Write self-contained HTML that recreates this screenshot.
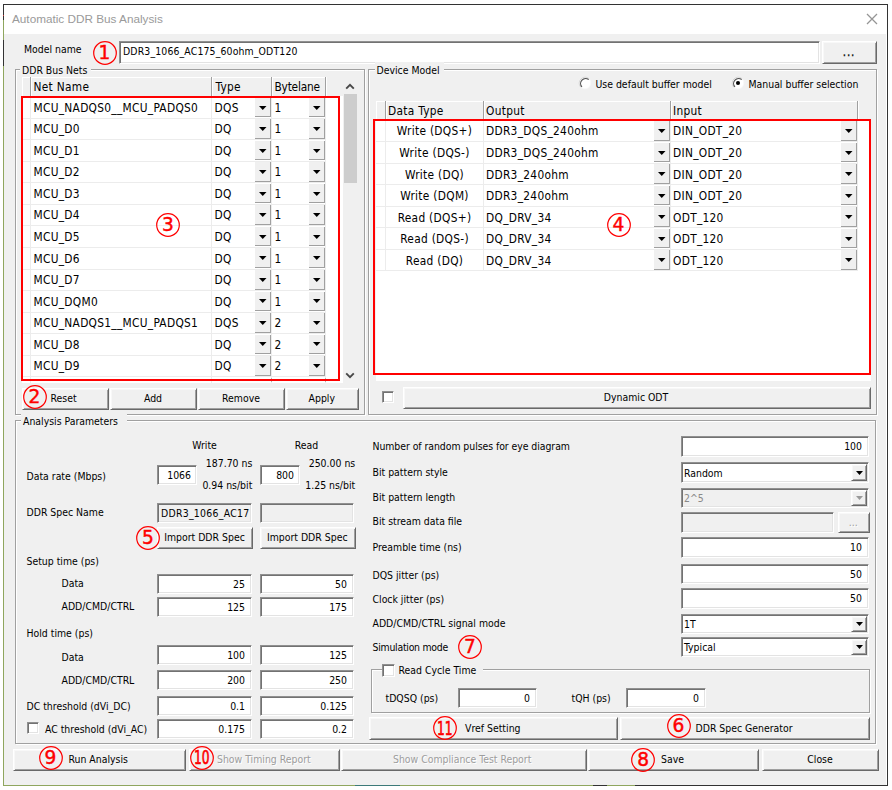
<!DOCTYPE html>
<html lang="en"><head><meta charset="utf-8"><title>Automatic DDR Bus Analysis</title>
<style>
html,body{margin:0;padding:0;background:#fff;}
body{position:relative;width:892px;height:790px;overflow:hidden;font-family:"DejaVu Sans Condensed","Liberation Sans",sans-serif;font-size:10.4px;color:#000;}
#win{position:absolute;left:3px;top:4px;width:883px;height:780px;border:1px solid #333;background:#fff}
#title{position:absolute;left:4px;top:5px;width:883px;height:29px;background:#fff}
#client{position:absolute;left:4px;top:34px;width:882px;height:751px;background:#f0f0f0}
.bg{position:absolute;background:#8fa65e}
.t{position:absolute;white-space:pre;line-height:16px;height:16px}
#ttl{font-family:"Liberation Sans",sans-serif;font-size:11.75px;color:#9a9a9a}
.g{font-size:11.8px;letter-spacing:0.3px}
.a{position:absolute;display:block;overflow:visible}
.edit{position:absolute;box-sizing:border-box;background:#fff;border:1px solid;border-color:#909090 #fff #fff #909090;box-shadow:inset 1px 1px 0 #727272, inset -1px -1px 0 #e3e3e3;white-space:pre;overflow:hidden}
.edit.dis{background:#f0f0f0}
.cb.dis{color:#8a8a8a}
.cb{font-size:10.4px}
.btn{position:absolute;box-sizing:border-box;background:#f0f0f0;border:1px solid;border-color:#fff #696969 #696969 #fff;box-shadow:inset 1px 1px 0 #f8f8f8, inset -1px -1px 0 #a0a0a0;white-space:pre;overflow:hidden}
.bdis{color:#9d9d9d;text-shadow:1px 1px 0 #fff}
.gw{position:absolute;box-sizing:border-box;border:1px solid #fff}
.gd{position:absolute;box-sizing:border-box;border:1px solid #a0a0a0}
.gl{background:#f0f0f0;padding:0 8px 0 2px}
.grid{position:absolute;background:#fff}
.ghdr0{position:absolute;background:#f0f0f0}
.ghdr{position:absolute;background:#f0f0f0;box-shadow:inset 1px 1px 0 #fff}
.hsep{position:absolute;width:1px;background:#a0a0a0;box-shadow:1px 0 0 #fff}
.vsep{position:absolute;width:1px;background:#ececec}
.rsep{position:absolute;height:1px;background:#ececec}
.gbtn{position:absolute;box-sizing:border-box;background:#f0f0f0;border-right:1px solid #a0a0a0;border-bottom:1px solid #a0a0a0}
.red{position:absolute;border:2px solid #ff0000}
.cn{position:absolute;width:30px;height:24px;line-height:24px;text-align:center;color:#ff0000;font-family:"DejaVu Sans","Liberation Sans",sans-serif;font-size:18.6px;-webkit-text-stroke:0.45px #ff0000}
.cn2{display:inline-block;transform:scaleX(0.66);transform-origin:50% 50%;-webkit-text-stroke:0.65px #ff0000}
.chk{position:absolute;box-sizing:border-box;background:#fff;border:1px solid;border-color:#909090 #fff #fff #909090;box-shadow:inset 1px 1px 0 #727272, inset -1px -1px 0 #e3e3e3}
</style></head>
<body>
<div id="win"></div>
<div id="title"></div>
<div id="client"></div>
<div class="bg" style="left:3px;top:20px;width:1px;height:20px"></div>
<div style="position:absolute;left:3px;top:15px;width:1px;height:1px;background:#d04040"></div>
<div class="bg" style="left:3px;top:66px;width:1px;height:720px"></div>
<div class="bg" style="left:3px;top:785px;width:590px;height:1px"></div>
<div class="bg" style="left:607px;top:785px;width:28px;height:1px"></div>
<div style="position:absolute;left:355px;top:785px;width:45px;height:1px;background:#3d7a78"></div>
<span class="t" id="ttl" style="left:12px;top:11px">Automatic DDR Bus Analysis</span>
<svg class="a" style="left:866px;top:12.5px" width="12" height="12" viewBox="0 0 12 12"><path d="M1 1L11 11M11 1L1 11" stroke="#959595" stroke-width="1.25" fill="none"/></svg>
<span class="t " style="left:24px;top:41px;">Model name</span>
<svg class="a" style="left:90.5px;top:38.9px" width="28" height="28" viewBox="0 0 28 28"><circle cx="14.0" cy="14.0" r="11.3" fill="none" stroke="#ff0000" stroke-width="1.2"/></svg>
<span class="cn" style="left:89.5px;top:41.3px">1</span>
<div class="edit" style="left:119px;top:41px;width:701px;height:23px;line-height:19px;text-align:left;padding:0 4px 0 3px;letter-spacing:0.14px">DDR3_1066_AC175_60ohm_ODT120</div>
<div class="btn" style="left:822px;top:41px;width:55px;height:23px;"></div>
<span class="t " style="left:821.5px;width:55px;text-align:center;top:44px;letter-spacing:0.9px;font-size:11.5px;-webkit-text-stroke:0.25px #000">...</span>
<div class="gw" style="left:16px;top:70px;width:350px;height:346px"></div>
<div class="gd" style="left:15px;top:69px;width:350px;height:346px"></div>
<span class="t gl" style="left:20px;top:62px;padding-right:4px">DDR Bus Nets</span>
<div class="grid" style="left:22px;top:77px;width:336px;height:305.5px"></div>
<div class="ghdr0" style="left:22px;top:77px;width:321px;height:19px"></div>
<div class="ghdr" style="left:22px;top:77px;width:303.5px;height:19px"></div>
<div class="hsep" style="left:30.0px;top:77px;height:19px"></div>
<div class="hsep" style="left:210.5px;top:77px;height:19px"></div>
<div class="hsep" style="left:271.0px;top:77px;height:19px"></div>
<div class="hsep" style="left:325.0px;top:77px;height:19px"></div>
<span class="t g" style="left:33.5px;top:79px;">Net Name</span>
<span class="t g" style="left:215.5px;top:79px;">Type</span>
<span class="t g" style="left:274.5px;top:79px;letter-spacing:-0.2px">Bytelane</span>
<div class="rsep" style="left:22px;top:117.86999999999999px;width:303.5px"></div>
<span class="t g" style="left:33.5px;top:100px;">MCU_NADQS0__MCU_PADQS0</span>
<span class="t g" style="left:214.5px;top:100px;">DQS</span>
<span class="t g" style="left:274.5px;top:100px;">1</span>
<div class="gbtn" style="left:255px;top:97.85px;width:16px;height:19.52px"></div>
<svg class="a" style="left:259.25px;top:105.55999999999999px" width="7.5" height="4" viewBox="0 0 7.5 4"><path d="M0 0H7.5L3.75 4Z" fill="#000"/></svg>
<div class="gbtn" style="left:309px;top:97.85px;width:16px;height:19.52px"></div>
<svg class="a" style="left:313.25px;top:105.55999999999999px" width="7.5" height="4" viewBox="0 0 7.5 4"><path d="M0 0H7.5L3.75 4Z" fill="#000"/></svg>
<div class="rsep" style="left:22px;top:139.39px;width:303.5px"></div>
<span class="t g" style="left:33.5px;top:121px;">MCU_D0</span>
<span class="t g" style="left:214.5px;top:121px;">DQ</span>
<span class="t g" style="left:274.5px;top:121px;">1</span>
<div class="gbtn" style="left:255px;top:119.36999999999999px;width:16px;height:19.52px"></div>
<svg class="a" style="left:259.25px;top:127.07999999999998px" width="7.5" height="4" viewBox="0 0 7.5 4"><path d="M0 0H7.5L3.75 4Z" fill="#000"/></svg>
<div class="gbtn" style="left:309px;top:119.36999999999999px;width:16px;height:19.52px"></div>
<svg class="a" style="left:313.25px;top:127.07999999999998px" width="7.5" height="4" viewBox="0 0 7.5 4"><path d="M0 0H7.5L3.75 4Z" fill="#000"/></svg>
<div class="rsep" style="left:22px;top:160.91px;width:303.5px"></div>
<span class="t g" style="left:33.5px;top:143px;">MCU_D1</span>
<span class="t g" style="left:214.5px;top:143px;">DQ</span>
<span class="t g" style="left:274.5px;top:143px;">1</span>
<div class="gbtn" style="left:255px;top:140.89px;width:16px;height:19.52px"></div>
<svg class="a" style="left:259.25px;top:148.59999999999997px" width="7.5" height="4" viewBox="0 0 7.5 4"><path d="M0 0H7.5L3.75 4Z" fill="#000"/></svg>
<div class="gbtn" style="left:309px;top:140.89px;width:16px;height:19.52px"></div>
<svg class="a" style="left:313.25px;top:148.59999999999997px" width="7.5" height="4" viewBox="0 0 7.5 4"><path d="M0 0H7.5L3.75 4Z" fill="#000"/></svg>
<div class="rsep" style="left:22px;top:182.43px;width:303.5px"></div>
<span class="t g" style="left:33.5px;top:164px;">MCU_D2</span>
<span class="t g" style="left:214.5px;top:164px;">DQ</span>
<span class="t g" style="left:274.5px;top:164px;">1</span>
<div class="gbtn" style="left:255px;top:162.41px;width:16px;height:19.52px"></div>
<svg class="a" style="left:259.25px;top:170.12px" width="7.5" height="4" viewBox="0 0 7.5 4"><path d="M0 0H7.5L3.75 4Z" fill="#000"/></svg>
<div class="gbtn" style="left:309px;top:162.41px;width:16px;height:19.52px"></div>
<svg class="a" style="left:313.25px;top:170.12px" width="7.5" height="4" viewBox="0 0 7.5 4"><path d="M0 0H7.5L3.75 4Z" fill="#000"/></svg>
<div class="rsep" style="left:22px;top:203.95px;width:303.5px"></div>
<span class="t g" style="left:33.5px;top:186px;">MCU_D3</span>
<span class="t g" style="left:214.5px;top:186px;">DQ</span>
<span class="t g" style="left:274.5px;top:186px;">1</span>
<div class="gbtn" style="left:255px;top:183.93px;width:16px;height:19.52px"></div>
<svg class="a" style="left:259.25px;top:191.64px" width="7.5" height="4" viewBox="0 0 7.5 4"><path d="M0 0H7.5L3.75 4Z" fill="#000"/></svg>
<div class="gbtn" style="left:309px;top:183.93px;width:16px;height:19.52px"></div>
<svg class="a" style="left:313.25px;top:191.64px" width="7.5" height="4" viewBox="0 0 7.5 4"><path d="M0 0H7.5L3.75 4Z" fill="#000"/></svg>
<div class="rsep" style="left:22px;top:225.47px;width:303.5px"></div>
<span class="t g" style="left:33.5px;top:207px;">MCU_D4</span>
<span class="t g" style="left:214.5px;top:207px;">DQ</span>
<span class="t g" style="left:274.5px;top:207px;">1</span>
<div class="gbtn" style="left:255px;top:205.45px;width:16px;height:19.52px"></div>
<svg class="a" style="left:259.25px;top:213.15999999999997px" width="7.5" height="4" viewBox="0 0 7.5 4"><path d="M0 0H7.5L3.75 4Z" fill="#000"/></svg>
<div class="gbtn" style="left:309px;top:205.45px;width:16px;height:19.52px"></div>
<svg class="a" style="left:313.25px;top:213.15999999999997px" width="7.5" height="4" viewBox="0 0 7.5 4"><path d="M0 0H7.5L3.75 4Z" fill="#000"/></svg>
<div class="rsep" style="left:22px;top:246.98999999999998px;width:303.5px"></div>
<span class="t g" style="left:33.5px;top:229px;">MCU_D5</span>
<span class="t g" style="left:214.5px;top:229px;">DQ</span>
<span class="t g" style="left:274.5px;top:229px;">1</span>
<div class="gbtn" style="left:255px;top:226.97px;width:16px;height:19.52px"></div>
<svg class="a" style="left:259.25px;top:234.67999999999998px" width="7.5" height="4" viewBox="0 0 7.5 4"><path d="M0 0H7.5L3.75 4Z" fill="#000"/></svg>
<div class="gbtn" style="left:309px;top:226.97px;width:16px;height:19.52px"></div>
<svg class="a" style="left:313.25px;top:234.67999999999998px" width="7.5" height="4" viewBox="0 0 7.5 4"><path d="M0 0H7.5L3.75 4Z" fill="#000"/></svg>
<div class="rsep" style="left:22px;top:268.51px;width:303.5px"></div>
<span class="t g" style="left:33.5px;top:251px;">MCU_D6</span>
<span class="t g" style="left:214.5px;top:251px;">DQ</span>
<span class="t g" style="left:274.5px;top:251px;">1</span>
<div class="gbtn" style="left:255px;top:248.48999999999998px;width:16px;height:19.52px"></div>
<svg class="a" style="left:259.25px;top:256.2px" width="7.5" height="4" viewBox="0 0 7.5 4"><path d="M0 0H7.5L3.75 4Z" fill="#000"/></svg>
<div class="gbtn" style="left:309px;top:248.48999999999998px;width:16px;height:19.52px"></div>
<svg class="a" style="left:313.25px;top:256.2px" width="7.5" height="4" viewBox="0 0 7.5 4"><path d="M0 0H7.5L3.75 4Z" fill="#000"/></svg>
<div class="rsep" style="left:22px;top:290.03px;width:303.5px"></div>
<span class="t g" style="left:33.5px;top:272px;">MCU_D7</span>
<span class="t g" style="left:214.5px;top:272px;">DQ</span>
<span class="t g" style="left:274.5px;top:272px;">1</span>
<div class="gbtn" style="left:255px;top:270.01px;width:16px;height:19.52px"></div>
<svg class="a" style="left:259.25px;top:277.71999999999997px" width="7.5" height="4" viewBox="0 0 7.5 4"><path d="M0 0H7.5L3.75 4Z" fill="#000"/></svg>
<div class="gbtn" style="left:309px;top:270.01px;width:16px;height:19.52px"></div>
<svg class="a" style="left:313.25px;top:277.71999999999997px" width="7.5" height="4" viewBox="0 0 7.5 4"><path d="M0 0H7.5L3.75 4Z" fill="#000"/></svg>
<div class="rsep" style="left:22px;top:311.54999999999995px;width:303.5px"></div>
<span class="t g" style="left:33.5px;top:294px;">MCU_DQM0</span>
<span class="t g" style="left:214.5px;top:294px;">DQ</span>
<span class="t g" style="left:274.5px;top:294px;">1</span>
<div class="gbtn" style="left:255px;top:291.53px;width:16px;height:19.52px"></div>
<svg class="a" style="left:259.25px;top:299.23999999999995px" width="7.5" height="4" viewBox="0 0 7.5 4"><path d="M0 0H7.5L3.75 4Z" fill="#000"/></svg>
<div class="gbtn" style="left:309px;top:291.53px;width:16px;height:19.52px"></div>
<svg class="a" style="left:313.25px;top:299.23999999999995px" width="7.5" height="4" viewBox="0 0 7.5 4"><path d="M0 0H7.5L3.75 4Z" fill="#000"/></svg>
<div class="rsep" style="left:22px;top:333.07px;width:303.5px"></div>
<span class="t g" style="left:33.5px;top:315px;">MCU_NADQS1__MCU_PADQS1</span>
<span class="t g" style="left:214.5px;top:315px;">DQS</span>
<span class="t g" style="left:274.5px;top:315px;">2</span>
<div class="gbtn" style="left:255px;top:313.04999999999995px;width:16px;height:19.52px"></div>
<svg class="a" style="left:259.25px;top:320.75999999999993px" width="7.5" height="4" viewBox="0 0 7.5 4"><path d="M0 0H7.5L3.75 4Z" fill="#000"/></svg>
<div class="gbtn" style="left:309px;top:313.04999999999995px;width:16px;height:19.52px"></div>
<svg class="a" style="left:313.25px;top:320.75999999999993px" width="7.5" height="4" viewBox="0 0 7.5 4"><path d="M0 0H7.5L3.75 4Z" fill="#000"/></svg>
<div class="rsep" style="left:22px;top:354.59000000000003px;width:303.5px"></div>
<span class="t g" style="left:33.5px;top:337px;">MCU_D8</span>
<span class="t g" style="left:214.5px;top:337px;">DQ</span>
<span class="t g" style="left:274.5px;top:337px;">2</span>
<div class="gbtn" style="left:255px;top:334.57px;width:16px;height:19.52px"></div>
<svg class="a" style="left:259.25px;top:342.28000000000003px" width="7.5" height="4" viewBox="0 0 7.5 4"><path d="M0 0H7.5L3.75 4Z" fill="#000"/></svg>
<div class="gbtn" style="left:309px;top:334.57px;width:16px;height:19.52px"></div>
<svg class="a" style="left:313.25px;top:342.28000000000003px" width="7.5" height="4" viewBox="0 0 7.5 4"><path d="M0 0H7.5L3.75 4Z" fill="#000"/></svg>
<div class="rsep" style="left:22px;top:376.11px;width:303.5px"></div>
<span class="t g" style="left:33.5px;top:358px;">MCU_D9</span>
<span class="t g" style="left:214.5px;top:358px;">DQ</span>
<span class="t g" style="left:274.5px;top:358px;">2</span>
<div class="gbtn" style="left:255px;top:356.09000000000003px;width:16px;height:19.52px"></div>
<svg class="a" style="left:259.25px;top:363.8px" width="7.5" height="4" viewBox="0 0 7.5 4"><path d="M0 0H7.5L3.75 4Z" fill="#000"/></svg>
<div class="gbtn" style="left:309px;top:356.09000000000003px;width:16px;height:19.52px"></div>
<svg class="a" style="left:313.25px;top:363.8px" width="7.5" height="4" viewBox="0 0 7.5 4"><path d="M0 0H7.5L3.75 4Z" fill="#000"/></svg>
<div class="vsep" style="left:30.0px;top:96px;height:286.5px"></div>
<div class="vsep" style="left:210.5px;top:96px;height:286.5px"></div>
<div class="vsep" style="left:271.0px;top:96px;height:286.5px"></div>
<div class="vsep" style="left:325.0px;top:96px;height:286.5px"></div>
<div style="position:absolute;left:271px;top:378px;width:1px;height:4px;background:#b4b4b4"></div>
<div style="position:absolute;left:325px;top:378px;width:1px;height:4px;background:#b4b4b4"></div>
<div style="position:absolute;left:343px;top:77px;width:15px;height:305.5px;background:#f0f0f0"></div>
<div style="position:absolute;left:343.5px;top:94.3px;width:13.5px;height:89px;background:#cdcdcd"></div>
<svg class="a" style="left:345px;top:82.5px" width="10" height="7" viewBox="0 0 10 7"><path d="M1.2 5.6L5 1.8L8.8 5.6" fill="none" stroke="#484848" stroke-width="1.9"/></svg>
<svg class="a" style="left:345px;top:371.5px" width="10" height="7" viewBox="0 0 10 7"><path d="M1.2 1.4L5 5.2L8.8 1.4" fill="none" stroke="#484848" stroke-width="1.9"/></svg>
<div class="red" style="left:21px;top:96px;width:315px;height:281px"></div>
<svg class="a" style="left:154.0px;top:211.0px" width="28" height="28" viewBox="0 0 28 28"><circle cx="14.0" cy="14.0" r="11.3" fill="none" stroke="#ff0000" stroke-width="1.2"/></svg>
<span class="cn" style="left:153px;top:213.4px">3</span>
<div class="btn" style="left:22px;top:388px;width:87px;height:22px;"></div>
<span class="t " style="left:50.5px;top:390px;">Reset</span>
<svg class="a" style="left:20.5px;top:382.9px" width="28" height="28" viewBox="0 0 28 28"><circle cx="14.0" cy="14.0" r="11.3" fill="none" stroke="#ff0000" stroke-width="1.2"/></svg>
<span class="cn" style="left:19.5px;top:385.29999999999995px">2</span>
<div class="btn" style="left:110px;top:388px;width:87px;height:22px;"></div>
<span class="t " style="left:109.5px;width:87px;text-align:center;top:390px;">Add</span>
<div class="btn" style="left:198px;top:388px;width:87px;height:22px;"></div>
<span class="t " style="left:197.5px;width:87px;text-align:center;top:390px;">Remove</span>
<div class="btn" style="left:286px;top:388px;width:73px;height:22px;"></div>
<span class="t " style="left:285.25px;width:73px;text-align:center;top:390px;">Apply</span>
<div class="gw" style="left:369px;top:70px;width:509px;height:346px"></div>
<div class="gd" style="left:368px;top:69px;width:509px;height:346px"></div>
<span class="t gl" style="left:374.5px;top:62px;padding-right:4px">Device Model</span>
<svg class="a" style="left:577.5px;top:76.3px" width="14" height="14" viewBox="0 0 14 14"><circle cx="7" cy="7" r="6.2" fill="#f8f8f8"/><circle cx="7" cy="7" r="5.2" fill="#fff"/><path d="M11.24 2.76A6.0 6.0 0 0 0 2.76 11.24" fill="none" stroke="#c8c8c8" stroke-width="0.7"/><path d="M10.72 3.65A5.0 5.0 0 0 0 3.92 10.94" fill="none" stroke="#555" stroke-width="1.2"/></svg>
<span class="t " style="left:595.5px;top:76px;">Use default buffer model</span>
<svg class="a" style="left:731px;top:76.3px" width="14" height="14" viewBox="0 0 14 14"><circle cx="7" cy="7" r="6.2" fill="#f8f8f8"/><circle cx="7" cy="7" r="5.2" fill="#fff"/><path d="M11.24 2.76A6.0 6.0 0 0 0 2.76 11.24" fill="none" stroke="#c8c8c8" stroke-width="0.7"/><path d="M10.72 3.65A5.0 5.0 0 0 0 3.92 10.94" fill="none" stroke="#555" stroke-width="1.2"/><circle cx="7" cy="7" r="2.05" fill="#000"/></svg>
<span class="t " style="left:748.5px;top:76px;">Manual buffer selection</span>
<div class="grid" style="left:376px;top:101px;width:495px;height:280px"></div>
<div class="ghdr0" style="left:376px;top:101px;width:495px;height:18.5px"></div>
<div class="ghdr" style="left:376px;top:101px;width:481px;height:18.5px"></div>
<div class="hsep" style="left:385.0px;top:101px;height:18.5px"></div>
<div class="hsep" style="left:483.0px;top:101px;height:18.5px"></div>
<div class="hsep" style="left:669.5px;top:101px;height:18.5px"></div>
<div class="hsep" style="left:856.5px;top:101px;height:18.5px"></div>
<span class="t g" style="left:388px;top:103px;">Data Type</span>
<span class="t g" style="left:486px;top:103px;">Output</span>
<span class="t g" style="left:673px;top:103px;">Input</span>
<div class="rsep" style="left:376px;top:141.02px;width:481px"></div>
<span class="t g" style="left:385.5px;width:98px;text-align:center;top:123px;">Write (DQS+)</span>
<span class="t g" style="left:486px;top:123px;">DDR3_DQS_240ohm</span>
<span class="t g" style="left:673px;top:123px;">DIN_ODT_20</span>
<div class="gbtn" style="left:653.5px;top:121.0px;width:16.0px;height:19.52px"></div>
<svg class="a" style="left:657.75px;top:129.15999999999997px" width="7.5" height="4" viewBox="0 0 7.5 4"><path d="M0 0H7.5L3.75 4Z" fill="#000"/></svg>
<div class="gbtn" style="left:841px;top:121.0px;width:16px;height:19.52px"></div>
<svg class="a" style="left:845.25px;top:129.15999999999997px" width="7.5" height="4" viewBox="0 0 7.5 4"><path d="M0 0H7.5L3.75 4Z" fill="#000"/></svg>
<div class="rsep" style="left:376px;top:162.54px;width:481px"></div>
<span class="t g" style="left:385.5px;width:98px;text-align:center;top:145px;">Write (DQS-)</span>
<span class="t g" style="left:486px;top:145px;">DDR3_DQS_240ohm</span>
<span class="t g" style="left:673px;top:145px;">DIN_ODT_20</span>
<div class="gbtn" style="left:653.5px;top:142.52px;width:16.0px;height:19.52px"></div>
<svg class="a" style="left:657.75px;top:150.67999999999998px" width="7.5" height="4" viewBox="0 0 7.5 4"><path d="M0 0H7.5L3.75 4Z" fill="#000"/></svg>
<div class="gbtn" style="left:841px;top:142.52px;width:16px;height:19.52px"></div>
<svg class="a" style="left:845.25px;top:150.67999999999998px" width="7.5" height="4" viewBox="0 0 7.5 4"><path d="M0 0H7.5L3.75 4Z" fill="#000"/></svg>
<div class="rsep" style="left:376px;top:184.06px;width:481px"></div>
<span class="t g" style="left:385.5px;width:98px;text-align:center;top:167px;">Write (DQ)</span>
<span class="t g" style="left:486px;top:167px;">DDR3_240ohm</span>
<span class="t g" style="left:673px;top:167px;">DIN_ODT_20</span>
<div class="gbtn" style="left:653.5px;top:164.04px;width:16.0px;height:19.52px"></div>
<svg class="a" style="left:657.75px;top:172.2px" width="7.5" height="4" viewBox="0 0 7.5 4"><path d="M0 0H7.5L3.75 4Z" fill="#000"/></svg>
<div class="gbtn" style="left:841px;top:164.04px;width:16px;height:19.52px"></div>
<svg class="a" style="left:845.25px;top:172.2px" width="7.5" height="4" viewBox="0 0 7.5 4"><path d="M0 0H7.5L3.75 4Z" fill="#000"/></svg>
<div class="rsep" style="left:376px;top:205.57999999999998px;width:481px"></div>
<span class="t g" style="left:385.5px;width:98px;text-align:center;top:188px;">Write (DQM)</span>
<span class="t g" style="left:486px;top:188px;">DDR3_240ohm</span>
<span class="t g" style="left:673px;top:188px;">DIN_ODT_20</span>
<div class="gbtn" style="left:653.5px;top:185.56px;width:16.0px;height:19.52px"></div>
<svg class="a" style="left:657.75px;top:193.71999999999997px" width="7.5" height="4" viewBox="0 0 7.5 4"><path d="M0 0H7.5L3.75 4Z" fill="#000"/></svg>
<div class="gbtn" style="left:841px;top:185.56px;width:16px;height:19.52px"></div>
<svg class="a" style="left:845.25px;top:193.71999999999997px" width="7.5" height="4" viewBox="0 0 7.5 4"><path d="M0 0H7.5L3.75 4Z" fill="#000"/></svg>
<div class="rsep" style="left:376px;top:227.1px;width:481px"></div>
<span class="t g" style="left:385.5px;width:98px;text-align:center;top:210px;">Read (DQS+)</span>
<span class="t g" style="left:486px;top:210px;">DQ_DRV_34</span>
<span class="t g" style="left:673px;top:210px;">ODT_120</span>
<div class="gbtn" style="left:653.5px;top:207.07999999999998px;width:16.0px;height:19.52px"></div>
<svg class="a" style="left:657.75px;top:215.23999999999995px" width="7.5" height="4" viewBox="0 0 7.5 4"><path d="M0 0H7.5L3.75 4Z" fill="#000"/></svg>
<div class="gbtn" style="left:841px;top:207.07999999999998px;width:16px;height:19.52px"></div>
<svg class="a" style="left:845.25px;top:215.23999999999995px" width="7.5" height="4" viewBox="0 0 7.5 4"><path d="M0 0H7.5L3.75 4Z" fill="#000"/></svg>
<div class="rsep" style="left:376px;top:248.62px;width:481px"></div>
<span class="t g" style="left:385.5px;width:98px;text-align:center;top:231px;">Read (DQS-)</span>
<span class="t g" style="left:486px;top:231px;">DQ_DRV_34</span>
<span class="t g" style="left:673px;top:231px;">ODT_120</span>
<div class="gbtn" style="left:653.5px;top:228.6px;width:16.0px;height:19.52px"></div>
<svg class="a" style="left:657.75px;top:236.76px" width="7.5" height="4" viewBox="0 0 7.5 4"><path d="M0 0H7.5L3.75 4Z" fill="#000"/></svg>
<div class="gbtn" style="left:841px;top:228.6px;width:16px;height:19.52px"></div>
<svg class="a" style="left:845.25px;top:236.76px" width="7.5" height="4" viewBox="0 0 7.5 4"><path d="M0 0H7.5L3.75 4Z" fill="#000"/></svg>
<div class="rsep" style="left:376px;top:270.14px;width:481px"></div>
<span class="t g" style="left:385.5px;width:98px;text-align:center;top:253px;">Read (DQ)</span>
<span class="t g" style="left:486px;top:253px;">DQ_DRV_34</span>
<span class="t g" style="left:673px;top:253px;">ODT_120</span>
<div class="gbtn" style="left:653.5px;top:250.12px;width:16.0px;height:19.52px"></div>
<svg class="a" style="left:657.75px;top:258.28px" width="7.5" height="4" viewBox="0 0 7.5 4"><path d="M0 0H7.5L3.75 4Z" fill="#000"/></svg>
<div class="gbtn" style="left:841px;top:250.12px;width:16px;height:19.52px"></div>
<svg class="a" style="left:845.25px;top:258.28px" width="7.5" height="4" viewBox="0 0 7.5 4"><path d="M0 0H7.5L3.75 4Z" fill="#000"/></svg>
<div class="vsep" style="left:385.0px;top:119.5px;height:151.14px"></div>
<div class="vsep" style="left:483.0px;top:119.5px;height:151.14px"></div>
<div class="vsep" style="left:669.5px;top:119.5px;height:151.14px"></div>
<div class="vsep" style="left:856.5px;top:119.5px;height:151.14px"></div>
<div class="red" style="left:373px;top:119px;width:494px;height:252px"></div>
<svg class="a" style="left:604.5px;top:211.0px" width="28" height="28" viewBox="0 0 28 28"><circle cx="14.0" cy="14.0" r="11.3" fill="none" stroke="#ff0000" stroke-width="1.2"/></svg>
<span class="cn" style="left:603.5px;top:213.4px">4</span>
<div class="chk" style="left:382px;top:390.5px;width:12px;height:12px"></div>
<div class="btn" style="left:403px;top:387px;width:468px;height:22px;"></div>
<span class="t " style="left:402.04999999999995px;width:468px;text-align:center;top:389px;">Dynamic ODT</span>
<div class="gw" style="left:16px;top:421px;width:861px;height:324px"></div>
<div class="gd" style="left:15px;top:420px;width:861px;height:324px"></div>
<span class="t gl" style="left:21px;top:413px;padding-right:9px">Analysis Parameters</span>
<span class="t " style="left:174.5px;width:60px;text-align:center;top:437px;">Write</span>
<span class="t " style="left:276.5px;width:60px;text-align:center;top:437px;">Read</span>
<span class="t " style="left:52.30000000000001px;width:200px;text-align:right;top:455px;">187.70 ns</span>
<span class="t " style="left:52.30000000000001px;width:200px;text-align:right;top:477px;">0.94 ns/bit</span>
<span class="t " style="left:155.2px;width:200px;text-align:right;top:455px;">250.00 ns</span>
<span class="t " style="left:155.2px;width:200px;text-align:right;top:477px;">1.25 ns/bit</span>
<span class="t " style="left:26.5px;top:468px;">Data rate (Mbps)</span>
<div class="edit" style="left:157px;top:465px;width:40px;height:20px;line-height:18px;text-align:right;padding:0 5px 0 4px">1066</div>
<div class="edit" style="left:260px;top:465px;width:40px;height:20px;line-height:18px;text-align:right;padding:0 5px 0 4px">800</div>
<span class="t " style="left:26.5px;top:504px;">DDR Spec Name</span>
<div class="edit dis" style="left:157px;top:503px;width:95px;height:20px;line-height:18px;text-align:left;padding:0 4px 0 3px;letter-spacing:0.27px">DDR3_1066_AC17</div>
<div class="edit dis" style="left:260px;top:503px;width:94px;height:20px;line-height:18px;text-align:right;padding:0 6px 0 5px"></div>
<div class="btn" style="left:157px;top:527px;width:96px;height:22px;"></div>
<span class="t " style="left:156.5px;width:96px;text-align:center;top:529px;">Import DDR Spec</span>
<div class="btn" style="left:260px;top:527px;width:96px;height:22px;"></div>
<span class="t " style="left:259.25px;width:96px;text-align:center;top:529px;">Import DDR Spec</span>
<svg class="a" style="left:134.0px;top:523.9px" width="28" height="28" viewBox="0 0 28 28"><circle cx="14.0" cy="14.0" r="11.3" fill="none" stroke="#ff0000" stroke-width="1.2"/></svg>
<span class="cn" style="left:133px;top:526.3px">5</span>
<span class="t " style="left:26.5px;top:553px;">Setup time (ps)</span>
<span class="t " style="left:61.5px;top:575px;">Data</span>
<div class="edit" style="left:157px;top:574px;width:95px;height:20px;line-height:18px;text-align:right;padding:0 6px 0 5px">25</div>
<div class="edit" style="left:260px;top:574px;width:94px;height:20px;line-height:18px;text-align:right;padding:0 6px 0 5px">50</div>
<span class="t " style="left:61.5px;top:598px;">ADD/CMD/CTRL</span>
<div class="edit" style="left:157px;top:597px;width:95px;height:20px;line-height:18px;text-align:right;padding:0 6px 0 5px">125</div>
<div class="edit" style="left:260px;top:597px;width:94px;height:20px;line-height:18px;text-align:right;padding:0 6px 0 5px">175</div>
<span class="t " style="left:26.5px;top:625px;">Hold time (ps)</span>
<span class="t " style="left:61.5px;top:649px;">Data</span>
<div class="edit" style="left:157px;top:645px;width:95px;height:20px;line-height:18px;text-align:right;padding:0 6px 0 5px">100</div>
<div class="edit" style="left:260px;top:645px;width:94px;height:20px;line-height:18px;text-align:right;padding:0 6px 0 5px">125</div>
<span class="t " style="left:61.5px;top:672px;">ADD/CMD/CTRL</span>
<div class="edit" style="left:157px;top:670px;width:95px;height:20px;line-height:18px;text-align:right;padding:0 6px 0 5px">200</div>
<div class="edit" style="left:260px;top:670px;width:94px;height:20px;line-height:18px;text-align:right;padding:0 6px 0 5px">250</div>
<span class="t " style="left:26.5px;top:698px;">DC threshold (dVi_DC)</span>
<div class="edit" style="left:157px;top:696px;width:95px;height:20px;line-height:18px;text-align:right;padding:0 6px 0 5px">0.1</div>
<div class="edit" style="left:260px;top:696px;width:94px;height:20px;line-height:18px;text-align:right;padding:0 6px 0 5px">0.125</div>
<div class="chk" style="left:27px;top:722px;width:12px;height:12px"></div>
<span class="t " style="left:45px;top:721px;">AC threshold (dVi_AC)</span>
<div class="edit" style="left:157px;top:719px;width:95px;height:20px;line-height:18px;text-align:right;padding:0 6px 0 5px">0.175</div>
<div class="edit" style="left:260px;top:719px;width:94px;height:20px;line-height:18px;text-align:right;padding:0 6px 0 5px">0.2</div>
<span class="t " style="left:372.5px;top:438px;letter-spacing:-0.05px">Number of random pulses for eye diagram</span>
<span class="t " style="left:372.5px;top:464px;">Bit pattern style</span>
<span class="t " style="left:372.5px;top:489px;">Bit pattern length</span>
<span class="t " style="left:372.5px;top:513px;">Bit stream data file</span>
<span class="t " style="left:372.5px;top:539px;">Preamble time (ns)</span>
<span class="t " style="left:372.5px;top:567px;">DQS jitter (ps)</span>
<span class="t " style="left:372.5px;top:591px;">Clock jitter (ps)</span>
<span class="t " style="left:372.5px;top:615px;">ADD/CMD/CTRL signal mode</span>
<span class="t " style="left:372.5px;top:639px;letter-spacing:-0.25px">Simulation mode</span>
<div class="edit" style="left:681px;top:436px;width:188px;height:21px;line-height:19px;text-align:right;padding:0 6px 0 5px">100</div>
<div class="edit cb" style="left:681px;top:462px;width:188px;height:21px;line-height:20px;text-align:left;padding:0 0 0 2px">Random</div>
<div class="btn" style="left:851px;top:464px;width:16px;height:17px"></div>
<svg class="a" style="left:855.5px;top:470.8px" width="7" height="4" viewBox="0 0 7 4"><path d="M0 0H7L3.5 4Z" fill="#000"/></svg>
<div class="edit cb dis" style="left:681px;top:488px;width:188px;height:20px;line-height:19px;text-align:left;padding:0 0 0 2px">2^5</div>
<div class="btn" style="left:851px;top:490px;width:16px;height:16px"></div>
<svg class="a" style="left:855.5px;top:496.3px" width="7" height="4" viewBox="0 0 7 4"><path d="M0 0H7L3.5 4Z" fill="#9a9a9a"/></svg>
<div class="edit dis" style="left:681px;top:512px;width:153px;height:21px;line-height:19px;text-align:right;padding:0 6px 0 5px"></div>
<div class="btn" style="left:838px;top:512px;width:32px;height:21px;"></div>
<span class="t bdis" style="left:837.25px;width:32px;text-align:center;top:514px;">...</span>
<div class="edit" style="left:681px;top:537px;width:188px;height:21px;line-height:19px;text-align:right;padding:0 6px 0 5px">10</div>
<div class="edit" style="left:681px;top:564px;width:188px;height:20px;line-height:18px;text-align:right;padding:0 6px 0 5px">50</div>
<div class="edit" style="left:681px;top:588px;width:188px;height:21px;line-height:19px;text-align:right;padding:0 6px 0 5px">50</div>
<div class="edit cb" style="left:681px;top:614px;width:188px;height:20px;line-height:19px;text-align:left;padding:0 0 0 2px">1T</div>
<div class="btn" style="left:851px;top:616px;width:16px;height:16px"></div>
<svg class="a" style="left:855.5px;top:622.3px" width="7" height="4" viewBox="0 0 7 4"><path d="M0 0H7L3.5 4Z" fill="#000"/></svg>
<div class="edit cb" style="left:681px;top:637px;width:188px;height:20px;line-height:19px;text-align:left;padding:0 0 0 2px">Typical</div>
<div class="btn" style="left:851px;top:639px;width:16px;height:16px"></div>
<svg class="a" style="left:855.5px;top:645.3px" width="7" height="4" viewBox="0 0 7 4"><path d="M0 0H7L3.5 4Z" fill="#000"/></svg>
<svg class="a" style="left:456.0px;top:632.85px" width="28" height="28" viewBox="0 0 28 28"><circle cx="14.0" cy="14.0" r="11.3" fill="none" stroke="#ff0000" stroke-width="1.2"/></svg>
<span class="cn" style="left:455px;top:635.25px">7</span>
<div class="gw" style="left:372px;top:670px;width:499px;height:44px"></div>
<div class="gd" style="left:371px;top:669px;width:499px;height:44px"></div>
<div style="position:absolute;left:382px;top:664px;width:101px;height:12px;background:#f0f0f0"></div>
<div class="chk" style="left:382px;top:664px;width:13px;height:13px"></div>
<span class="t " style="left:398.5px;top:662px;">Read Cycle Time</span>
<span class="t " style="left:385.5px;top:690px;">tDQSQ (ps)</span>
<div class="edit" style="left:458px;top:688px;width:79px;height:20px;line-height:18px;text-align:right;padding:0 6px 0 5px">0</div>
<span class="t " style="left:571.5px;top:690px;">tQH (ps)</span>
<div class="edit" style="left:626px;top:688px;width:80px;height:20px;line-height:18px;text-align:right;padding:0 6px 0 5px">0</div>
<div class="btn" style="left:369px;top:717px;width:249px;height:23px;"></div>
<span class="t " style="left:465px;top:720px;">Vref Setting</span>
<svg class="a" style="left:431.0px;top:713.9px" width="28" height="28" viewBox="0 0 28 28"><circle cx="14.0" cy="14.0" r="11.3" fill="none" stroke="#ff0000" stroke-width="1.2"/></svg>
<span class="cn" style="left:430px;top:717.0px"><span class="cn2">11</span></span>
<div class="btn" style="left:620px;top:717px;width:250px;height:23px;"></div>
<span class="t " style="left:695.5px;top:720px;">DDR Spec Generator</span>
<svg class="a" style="left:664.5px;top:711.9px" width="28" height="28" viewBox="0 0 28 28"><circle cx="14.0" cy="14.0" r="11.3" fill="none" stroke="#ff0000" stroke-width="1.2"/></svg>
<span class="cn" style="left:663.5px;top:714.3px">6</span>
<div class="btn" style="left:13px;top:749px;width:173px;height:22px;"></div>
<span class="t " style="left:68.5px;top:751px;">Run Analysis</span>
<svg class="a" style="left:36.5px;top:743.9px" width="28" height="28" viewBox="0 0 28 28"><circle cx="14.0" cy="14.0" r="11.3" fill="none" stroke="#ff0000" stroke-width="1.2"/></svg>
<span class="cn" style="left:35.5px;top:746.3px">9</span>
<div class="btn" style="left:189px;top:749px;width:151px;height:22px;"></div>
<span class="t bdis" style="left:217px;top:751px;">Show Timing Report</span>
<svg class="a" style="left:188.0px;top:743.9px" width="28" height="28" viewBox="0 0 28 28"><circle cx="14.0" cy="14.0" r="11.3" fill="none" stroke="#ff0000" stroke-width="1.2"/></svg>
<span class="cn" style="left:187px;top:746.3px"><span class="cn2">10</span></span>
<div class="btn" style="left:341px;top:749px;width:246px;height:22px;"></div>
<span class="t bdis" style="left:393px;top:751px;">Show Compliance Test Report</span>
<div class="btn" style="left:588px;top:749px;width:171px;height:22px;"></div>
<span class="t " style="left:661px;top:751px;">Save</span>
<svg class="a" style="left:629.25px;top:745.9px" width="28" height="28" viewBox="0 0 28 28"><circle cx="14.0" cy="14.0" r="11.3" fill="none" stroke="#ff0000" stroke-width="1.2"/></svg>
<span class="cn" style="left:628.25px;top:748.3px">8</span>
<div class="btn" style="left:762px;top:749px;width:117px;height:22px;"></div>
<span class="t " style="left:761.5px;width:117px;text-align:center;top:751px;">Close</span>
</body></html>
